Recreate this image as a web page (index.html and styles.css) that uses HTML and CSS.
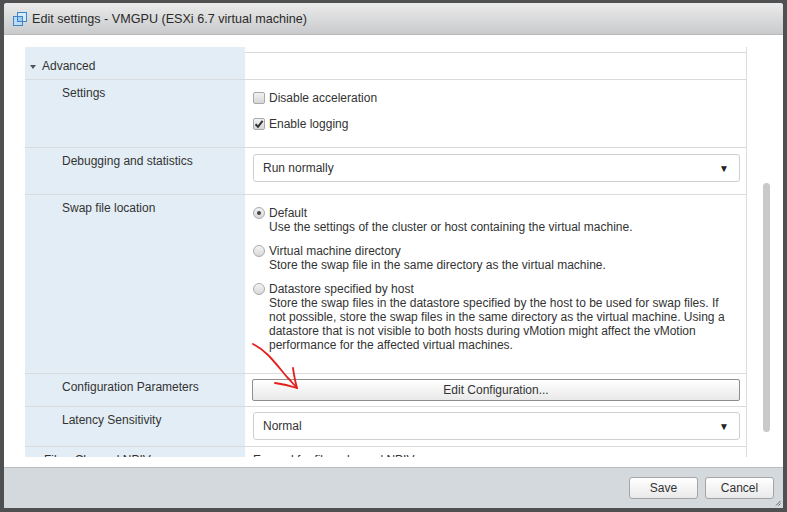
FILE: index.html
```html
<!DOCTYPE html>
<html>
<head>
<meta charset="utf-8">
<link rel="stylesheet" href="styles.css">
</head>
<body>
<div class="dialog">
  <div class="titlebar">
    <svg class="ticon" width="16" height="16" viewBox="0 0 16 16">
      <rect x="1.5" y="5.5" width="9" height="9" fill="#bcdcf5" stroke="#3f86c8"/>
      <rect x="5.5" y="1.5" width="9" height="9" fill="#d7ecfb" stroke="#3f86c8"/>
      <rect x="5.5" y="5.5" width="5" height="5" fill="#9ccbef" stroke="#3f86c8"/>
    </svg>
    <span class="title">Edit settings - VMGPU (ESXi 6.7 virtual machine)</span>
  </div>
  <div class="body">
    <div class="viewport">
      <div class="row tail"><div class="lab"></div><div class="val"></div></div>
      <div class="row adv">
        <div class="lab"><span class="caret"></span>Advanced</div>
        <div class="val"></div>
      </div>
      <div class="row settings">
        <div class="lab sub">Settings</div>
        <div class="val checks">
          <label class="opt"><span class="cb"></span>Disable acceleration</label>
          <label class="opt"><span class="cb on"><svg width="10" height="10" viewBox="0 0 10 10"><path d="M1.5 5.2 L4 7.8 L8.6 1.8" fill="none" stroke="#333" stroke-width="2"/></svg></span>Enable logging</label>
        </div>
      </div>
      <div class="row debug">
        <div class="lab sub">Debugging and statistics</div>
        <div class="val"><div class="select">Run normally<span class="dd">▼</span></div></div>
      </div>
      <div class="row swap">
        <div class="lab sub">Swap file location</div>
        <div class="val radios">
          <div class="ropt"><span class="rb on"></span><div class="rtext"><div>Default</div><div>Use the settings of the cluster or host containing the virtual machine.</div></div></div>
          <div class="ropt"><span class="rb"></span><div class="rtext"><div>Virtual machine directory</div><div>Store the swap file in the same directory as the virtual machine.</div></div></div>
          <div class="ropt"><span class="rb"></span><div class="rtext"><div>Datastore specified by host</div><div>Store the swap files in the datastore specified by the host to be used for swap files. If not possible, store the swap files in the same directory as the virtual machine. Using a datastore that is not visible to both hosts during vMotion might affect the vMotion performance for the affected virtual machines.</div></div></div>
        </div>
      </div>
      <div class="row config">
        <div class="lab sub">Configuration Parameters</div>
        <div class="val"><div class="btn wide">Edit Configuration...</div></div>
      </div>
      <div class="row latency">
        <div class="lab sub">Latency Sensitivity</div>
        <div class="val"><div class="select">Normal<span class="dd">▼</span></div></div>
      </div>
      <div class="row fibre">
        <div class="lab"><span class="caret closed"></span>Fibre Channel NPIV</div>
        <div class="val plain">Expand for fibre channel NPIV</div>
      </div>
    </div>
    <div class="track"><div class="thumb"></div></div>
    <svg class="arrow" width="60" height="60" viewBox="0 0 60 60">
      <path d="M2 2 C8 5 12 8 17 13 C24 20 30 28 36 35 C40 39 43 43 46 46" fill="none" stroke="#e3201b" stroke-width="1.8" stroke-linecap="round"/>
      <path d="M42 26 C43 33 44 39 46 46 C40 44 32 42 24 41" fill="none" stroke="#e3201b" stroke-width="1.8" stroke-linecap="round" stroke-linejoin="round"/>
    </svg>
  </div>
  <div class="footer">
    <div class="btn fbtn">Save</div>
    <div class="btn fbtn">Cancel</div>
    <svg class="grip" width="6" height="6" viewBox="0 0 6 6"><path d="M5.5 1 L1 5.5 M5.5 3.5 L3.5 5.5" stroke="#666" stroke-width="1"/></svg>
  </div>
</div>
</body>
</html>
```

FILE: styles.css
```css
* { box-sizing: border-box; }
html, body { margin: 0; padding: 0; }
body {
  width: 787px;
  height: 512px;
  overflow: hidden;
  background: #4f5052;
  font-family: "Liberation Sans", Arial, sans-serif;
  font-size: 12px;
  color: #333;
  padding: 3px 4px 0 4px;
}
.dialog {
  width: 779px;
  height: 505px;
  display: flex;
  flex-direction: column;
  background: #fff;
  border-radius: 3px 3px 0 0;
  overflow: hidden;
}
.titlebar {
  height: 32px;
  flex: none;
  display: flex;
  align-items: center;
  padding-left: 8px;
  background: linear-gradient(#ebebeb, #c9cacc);
  border-bottom: 1px solid #b8b9bb;
}
.ticon { margin-right: 4px; margin-top: 1px; }
.title {
  font-size: 12.6px;
  color: #2a2a2a;
}
.body {
  flex: 1;
  position: relative;
  display: flex;
  padding: 12px 0 10px 21px;
  background: #fff;
}
.viewport {
  width: 722px;
  height: 410px;
  overflow: hidden;
  border-right: 1px solid #dcdcdc;
}
.row {
  display: grid;
  grid-template-columns: 220px 1fr;
  border-bottom: 1px solid #d9dcdf;
}
.lab {
  background: #e3edf5;
  padding: 6px 0 0 37px;
  line-height: 14px;
}
.val {
  padding: 0 6px 0 8px;
}
.tail { height: 6px; }
.adv { height: 27px; }
.adv .lab {
  padding: 0 0 0 5px;
  line-height: 26px;
  display: flex;
  align-items: center;
}
.caret {
  width: 0;
  height: 0;
  border-left: 3.5px solid transparent;
  border-right: 3.5px solid transparent;
  border-top: 4px solid #555;
  margin-right: 6px;
  margin-top: 1px;
}
.caret.closed {
  border-top: 3.5px solid transparent;
  border-bottom: 3.5px solid transparent;
  border-left: 4px solid #555;
  border-right: 0;
  margin-right: 8px;
  margin-left: 2px;
}
.settings { height: 68px; }
.checks { padding-top: 11px; }
.opt {
  display: flex;
  align-items: center;
  height: 14px;
  line-height: 14px;
  margin-bottom: 12px;
}
.cb {
  width: 12px;
  height: 12px;
  border: 1px solid #a9a9a9;
  border-radius: 2px;
  background: linear-gradient(#f2f2f2, #d6d6d6);
  margin-right: 4px;
  display: flex;
  align-items: center;
  justify-content: center;
}
.debug { height: 47px; }
.debug .val, .latency .val { padding-top: 6px; }
.select {
  height: 28px;
  border: 1px solid #cfcfcf;
  border-radius: 3px;
  display: flex;
  align-items: center;
  justify-content: space-between;
  padding: 0 10px 0 9px;
  color: #333;
  background: #fff;
}
.dd { font-size: 10px; color: #222; }
.swap { height: 179px; }
.radios { padding-top: 11px; }
.ropt {
  display: flex;
  align-items: flex-start;
  line-height: 14px;
  margin-bottom: 10px;
}
.rb {
  flex: none;
  width: 12px;
  height: 12px;
  border-radius: 50%;
  border: 1px solid #aaa;
  background: linear-gradient(#f4f4f4, #d8d8d8);
  margin: 1px 4px 0 0;
  position: relative;
}
.rb.on::after {
  content: "";
  position: absolute;
  left: 3px;
  top: 3px;
  width: 4px;
  height: 4px;
  border-radius: 50%;
  background: #444;
}
.rtext { width: 460px; }
.config { height: 33px; }
.config .val { padding: 5px 6px 0 7px; }
.btn {
  display: flex;
  align-items: center;
  justify-content: center;
  border: 1px solid #8f8f8f;
  border-radius: 2px;
  background: linear-gradient(#ffffff, #e9e9e9);
  color: #333;
}
.wide { height: 22px; }
.latency { height: 40px; }
.latency .val { padding-top: 5px; }
.fibre .lab { padding: 6px 0 0 5px; display: flex; height: 30px; align-items: flex-start; }
.fibre .lab .caret { margin-top: 4px; }
.fibre .plain { padding-top: 6px; line-height: 14px; }
.track {
  width: 7px;
  margin: 136px 0 0 16px;
}
.thumb {
  height: 249px;
  width: 7px;
  border-radius: 4px;
  background: #c9c9c9;
}
.arrow {
  position: absolute;
  left: 247px;
  top: 307px;
}
.footer {
  height: 41px;
  flex: none;
  background: #d4d9de;
  border-top: 1px solid #b9bdc2;
  display: flex;
  justify-content: flex-end;
  align-items: flex-start;
  padding: 9px 9px 0 0;
  gap: 7px;
  position: relative;
}
.fbtn {
  width: 69px;
  height: 22px;
  border-color: #a5a5a5;
  border-radius: 3px;
  font-size: 12px;
}
.grip {
  position: absolute;
  right: 2px;
  bottom: 2px;
}
```
